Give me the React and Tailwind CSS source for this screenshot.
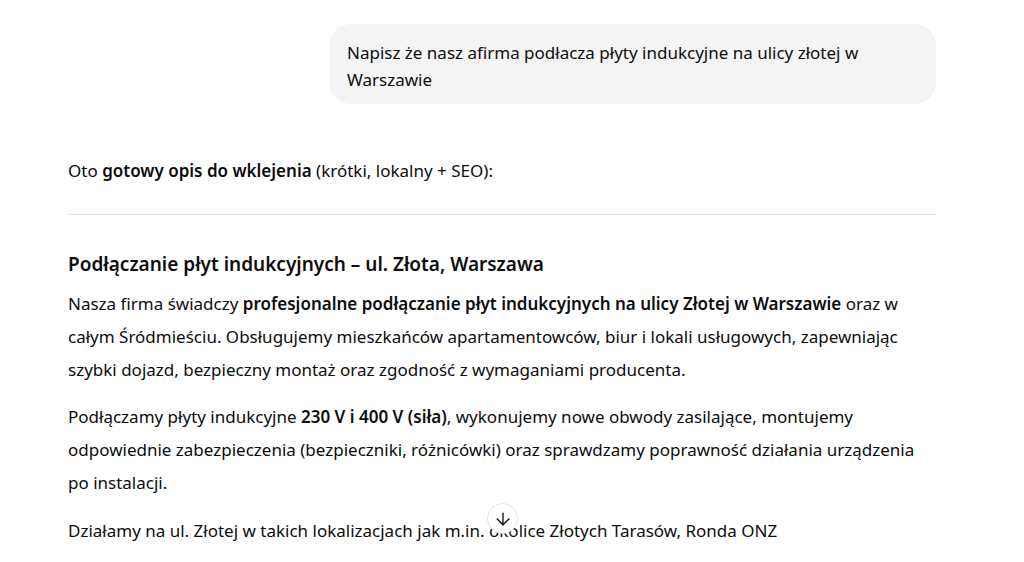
import React from 'react';
import { ArrowDown } from 'lucide-react';

const App = () => {
  return (
    <div
      className="relative h-[562px] w-[1024px] overflow-hidden bg-white text-[#0d0d0d]"
      style={{ fontFamily: '"Noto Sans", "Open Sans", sans-serif' }}
    >
      <div className="ml-[68px] w-[868px] pt-6">
        {/* User message */}
        <div className="flex justify-end">
          <div className="w-[607px] rounded-[22px] bg-[#f4f4f4] px-[18px] pt-[15px] pb-[11px] text-[17px] leading-[27px]">
            Napisz że nasz afirma podłacza płyty indukcyjne na ulicy złotej w
            <br />
            Warszawie
          </div>
        </div>

        {/* Assistant message */}
        <div className="mt-[50px] text-[17px] leading-[33px]">
          <p>
            Oto <strong className="font-semibold">gotowy opis do wklejenia</strong> (krótki, lokalny + SEO):
          </p>

          <hr className="mt-[27px] mb-[35px] border-t border-[#e5e5e5]" />

          <h3 className="mb-[9px] text-[19px] font-semibold leading-[28px]">
            Podłączanie płyt indukcyjnych – ul. Złota, Warszawa
          </h3>

          <p>
            Nasza firma świadczy{' '}
            <strong className="font-semibold">
              profesjonalne podłączanie płyt indukcyjnych na ulicy Złotej w Warszawie
            </strong>{' '}
            oraz w
            <br />
            całym Śródmieściu. Obsługujemy mieszkańców apartamentowców, biur i lokali usługowych, zapewniając
            <br />
            szybki dojazd, bezpieczny montaż oraz zgodność z wymaganiami producenta.
          </p>

          <p className="mt-[14px]">
            Podłączamy płyty indukcyjne <strong className="font-semibold">230 V i 400 V (siła)</strong>, wykonujemy
            nowe obwody zasilające, montujemy
            <br />
            odpowiednie zabezpieczenia (bezpieczniki, różnicówki) oraz sprawdzamy poprawność działania urządzenia
            <br />
            po instalacji.
          </p>

          <p className="mt-[15px]">
            Działamy na ul. Złotej w takich lokalizacjach jak m.in. okolice Złotych Tarasów, Ronda ONZ
          </p>
        </div>
      </div>

      {/* Scroll to bottom button */}
      <button className="absolute left-[487px] top-[503px] flex h-[31px] w-[31px] items-center justify-center rounded-full border border-[#e3e3e3] bg-white text-[#0d0d0d]">
        <ArrowDown className="h-[20px] w-[20px]" strokeWidth={1.6} />
      </button>
    </div>
  );
};

export default App;
